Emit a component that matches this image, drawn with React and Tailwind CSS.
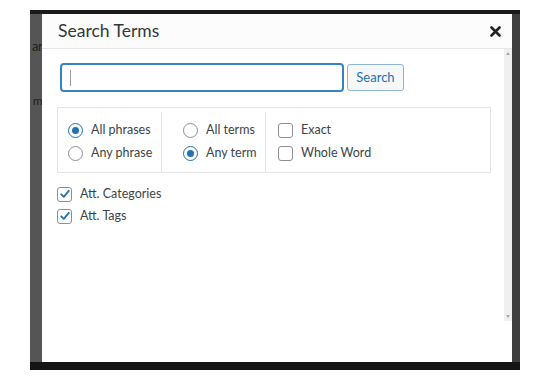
import React from 'react';

function Radio({ checked }) {
  return (
    <span
      className={`inline-flex h-[15px] w-[15px] shrink-0 items-center justify-center rounded-full border bg-white ${
        checked ? 'border-[#2271b1]' : 'border-[#8c8f94]'
      }`}
    >
      {checked && <span className="h-[7px] w-[7px] rounded-full bg-[#2271b1]" />}
    </span>
  );
}

function Check({ checked }) {
  return (
    <span className="inline-flex h-[15px] w-[15px] shrink-0 items-center justify-center rounded-[3px] border border-[#8c8f94] bg-white">
      {checked && (
        <svg width="12" height="12" viewBox="0 0 12 12" fill="none">
          <path d="M2.2 6.3 L4.8 8.8 L9.8 2.8" stroke="#2271b1" strokeWidth="1.8" strokeLinecap="round" strokeLinejoin="round" />
        </svg>
      )}
    </span>
  );
}

function Option({ children, control }) {
  return (
    <label className="flex h-[23px] items-center gap-[8px]">
      {control}
      <span>{children}</span>
    </label>
  );
}

export default function App() {
  return (
    <div
      className="h-[380px] w-[550px] overflow-hidden bg-white text-[#3c434a]"
      style={{ fontFamily: 'Lato, "Open Sans", sans-serif' }}
    >
      <div className="ml-[30px] mt-[10px] flex h-[360px] w-[490px] flex-col bg-[#4b4b4b]">
        {/* background strip */}
        <div className="h-[4px] bg-[#1a1a1a]" />
        <div className="flex flex-1">
          <div className="flex w-[12px] shrink-0 flex-col items-end overflow-hidden bg-[#555] pt-[26px] text-[#1e1e1e]">
            <span className="text-[13px] leading-none tracking-tighter">ar</span>
            <span className="mt-[42px] text-[12px] leading-none tracking-tighter">m</span>
          </div>

          {/* Modal */}
          <div className="flex h-[348px] w-[470px] shrink-0 flex-col bg-white">
            <div className="flex h-[35px] shrink-0 items-center justify-between border-b border-[#e5e5e5] bg-[#fcfcfc] pl-[16px] pr-[11px]">
              <h2 className="text-[17.5px] text-[#32373c]">Search Terms</h2>
              <svg width="11" height="11" viewBox="0 0 11 11">
                <path d="M1.5 1.5 L9.5 9.5 M9.5 1.5 L1.5 9.5" stroke="#1d2327" strokeWidth="2.6" strokeLinecap="round" />
              </svg>
            </div>

            <div className="flex flex-1">
              <div className="flex-1 pl-[15px] pt-[14px] text-[12.5px]">
                <div className="flex items-center gap-[3px] pl-[3px]">
                  <div className="flex h-[29px] w-[284px] items-center rounded-[4px] border-2 border-[#3582c4] bg-white pl-[8px]">
                    <span className="h-[16px] w-px bg-[#999]" />
                  </div>
                  <button className="h-[27px] w-[57px] rounded-[3px] border border-[#8fb3d6] bg-[#f6f7f7] text-[13px] text-[#2271b1]">
                    Search
                  </button>
                </div>

                <div className="mt-[15px] grid h-[66px] w-[434px] grid-cols-[103px_104px_1fr] border border-[#e4e4e4] pt-[4px]">
                  <div className="flex flex-col justify-center pl-[10px]">
                    <Option control={<Radio checked />}>All phrases</Option>
                    <Option control={<Radio />}>Any phrase</Option>
                  </div>
                  <div className="flex flex-col justify-center border-l border-[#e4e4e4] pl-[21px]">
                    <Option control={<Radio />}>All terms</Option>
                    <Option control={<Radio checked />}>Any term</Option>
                  </div>
                  <div className="flex flex-col justify-center border-l border-[#e4e4e4] pl-[12px]">
                    <Option control={<Check />}>Exact</Option>
                    <Option control={<Check />}>Whole Word</Option>
                  </div>
                </div>

                <div className="mt-[10px] flex flex-col">
                  <label className="flex h-[22px] items-center gap-[8px]">
                    <Check checked />
                    <span>Att. Categories</span>
                  </label>
                  <label className="flex h-[22px] items-center gap-[8px]">
                    <Check checked />
                    <span>Att. Tags</span>
                  </label>
                </div>
              </div>

              {/* scrollbar */}
              <div className="flex h-[272px] w-[8px] flex-col items-center justify-between bg-[#f0f0f0] py-[3px]">
                <span className="h-0 w-0 border-x-[2px] border-b-[3px] border-x-transparent border-b-[#aaa]" />
                <span className="h-0 w-0 border-x-[2px] border-t-[3px] border-x-transparent border-t-[#aaa]" />
              </div>
            </div>
          </div>

          <div className="w-[8px] bg-[#3f3f3f]" />
        </div>
        <div className="h-[8px] bg-[#141414]" />
      </div>
    </div>
  );
}
